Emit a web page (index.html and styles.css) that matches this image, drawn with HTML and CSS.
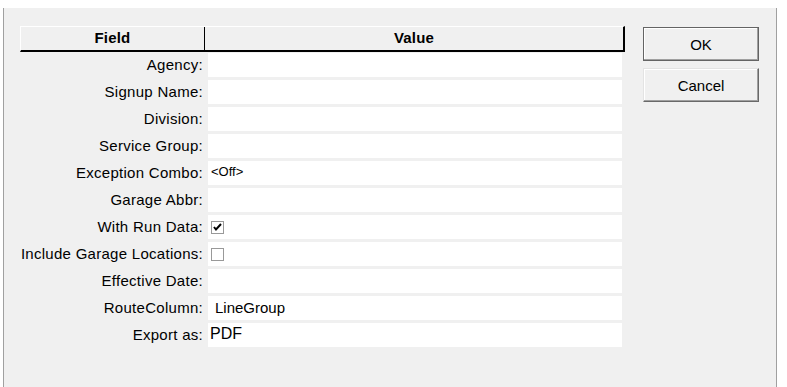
FILE: index.html
```html
<!DOCTYPE html>
<html>
<head>
    <meta name="viewport" content="width=device-width, initial-scale=1">
    <link rel="stylesheet" href="styles.css">
</head>
<body>
<div class="frame">
    <div class="content">
        <div class="grid">
            <div class="head">
                <div class="hcell field">Field</div>
                <div class="hcell value">Value</div>
            </div>
            <div class="row"><div class="label">Agency:</div><div class="cell"></div></div>
            <div class="row"><div class="label">Signup Name:</div><div class="cell"></div></div>
            <div class="row"><div class="label">Division:</div><div class="cell"></div></div>
            <div class="row"><div class="label">Service Group:</div><div class="cell"></div></div>
            <div class="row"><div class="label">Exception Combo:</div><div class="cell small">&lt;Off&gt;</div></div>
            <div class="row"><div class="label">Garage Abbr:</div><div class="cell"></div></div>
            <div class="row"><div class="label">With Run Data:</div><div class="cell"><span class="check"><svg width="11" height="11" viewBox="0 0 11 11"><path d="M2 5 L4 7.5 L9 2" fill="none" stroke="#000" stroke-width="2"/></svg></span></div></div>
            <div class="row"><div class="label">Include Garage Locations:</div><div class="cell"><span class="check"></span></div></div>
            <div class="row"><div class="label">Effective Date:</div><div class="cell"></div></div>
            <div class="row"><div class="label">RouteColumn:</div><div class="cell indent">LineGroup</div></div>
            <div class="row"><div class="label">Export as:</div><div class="cell big">PDF</div></div>
        </div>
        <div class="buttons">
            <button class="btn default">OK</button>
            <button class="btn">Cancel</button>
        </div>
    </div>
</div>
</body>
</html>
```

FILE: styles.css
```css
* {
    box-sizing: border-box;
}

body {
    margin: 0;
    background: #fff;
    font-family: "Liberation Sans", Arial, sans-serif;
    font-size: 15px;
    color: #000;
}

.frame {
    margin: 8px 0 0 3px;
    width: 774px;
    height: 379px;
    background: #f0f0f0;
    border-left: 1px solid #a0a0a0;
    border-right: 1px solid #a0a0a0;
}

.content {
    display: flex;
    padding: 18px 0 0 16px;
    gap: 18px;
}

.grid {
    width: 605px;
}

.head {
    display: flex;
    height: 26px;
    border-top: 1px solid #fff;
    border-left: 1px solid #fff;
    border-right: 2px solid #000;
    border-bottom: 2px solid #000;
    margin-bottom: 1px;
}

.hcell {
    font-weight: bold;
    text-align: center;
    line-height: 22px;
    letter-spacing: 0.2px;
}

.field {
    width: 184px;
    border-right: 1px solid #000;
}

.value {
    flex: 1;
}

.row {
    display: flex;
    height: 24px;
    margin-bottom: 3px;
}

.label {
    width: 185px;
    text-align: right;
    padding-right: 2px;
    line-height: 24px;
    letter-spacing: 0.28px;
    white-space: nowrap;
}

.cell {
    width: 414px;
    margin-left: 3px;
    background: #fff;
    line-height: 22px;
    padding-left: 3px;
    display: flex;
    align-items: center;
}

.small {
    font-size: 13px;
    align-items: flex-start;
}

.indent {
    padding-left: 7px;
    font-size: 15px;
}

.big {
    padding-left: 2px;
    font-size: 16px;
    align-items: flex-start;
}

.check {
    width: 13px;
    height: 13px;
    border: 1px solid #999;
    background: #fff;
    display: flex;
    align-items: center;
    justify-content: center;
}

.buttons {
    display: flex;
    flex-direction: column;
    gap: 7px;
    padding-top: 1px;
}

.btn {
    width: 116px;
    height: 34px;
    font-family: "Liberation Sans", Arial, sans-serif;
    font-size: 15px;
    color: #000;
    background: #f0f0f0;
    border: 1px solid;
    border-color: #e3e3e3 #696969 #696969 #e3e3e3;
    box-shadow: inset -1px -1px #a0a0a0, inset 1px 1px #fff;
    padding: 0;
}

.btn.default {
    border-color: #646464;
    box-shadow: inset -1px -1px #a0a0a0, inset 1px 1px #fff;
}
```
